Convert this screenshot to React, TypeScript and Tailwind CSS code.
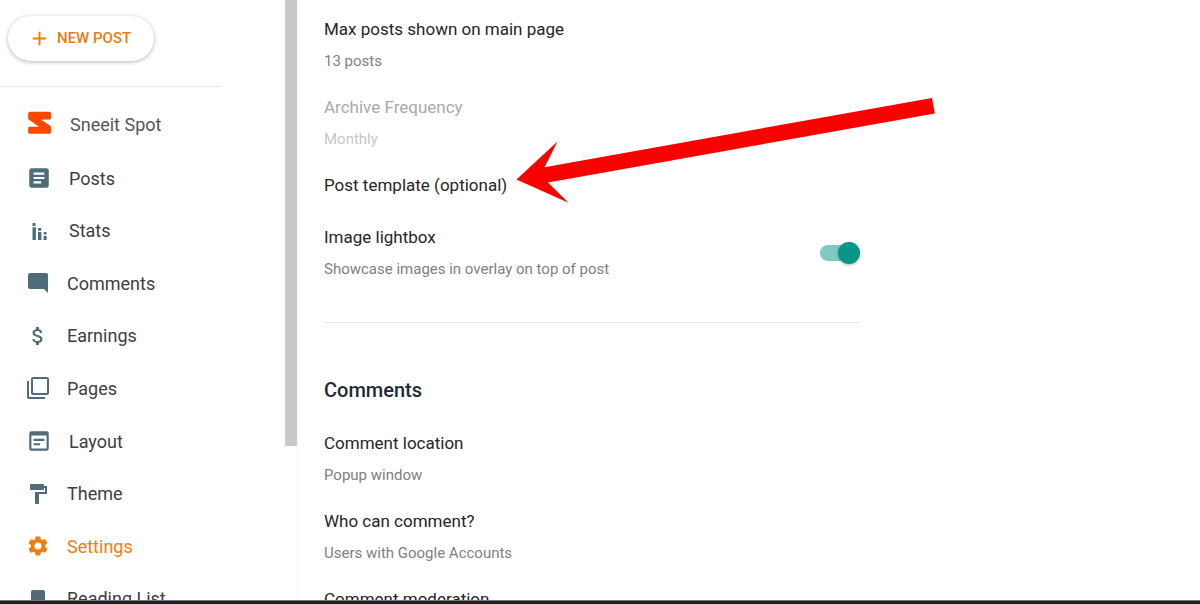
import { useState } from "react";
import type { ReactNode } from "react";
import {
  MdAdd,
  MdArticle,
  MdAttachMoney,
  MdBookmark,
  MdFilterNone,
  MdFormatPaint,
  MdModeComment,
  MdSettings,
  MdWysiwyg,
} from "react-icons/md";

const StatsIcon = () => (
  <svg viewBox="0 0 26 26" className="size-[26px]" fill="currentColor" aria-hidden="true">
    <path d="M6.5 5h3v3h-3zM6.5 9.2h3.4V22H6.5zM12 10h3.2v2.7H12zM12 14h3.4v8H12zM17.7 14h2.8v2.6h-2.8zM17.5 18h3.2v4h-3.2z" />
  </svg>
);

const BlogLogo = () => (
  <svg viewBox="0 0 26 26" className="size-[26px]" fill="#ff4500" aria-hidden="true">
    <path d="M4 .8H23.4Q25 .8 25 2.4V7.2Q25 8.4 23.8 8.4H14.8L24.2 14.8Q25 15.4 25 16.4V21.2Q25 22.8 23.4 22.8H3.8Q2.2 22.8 2.2 21.2V17Q2.2 15.8 3.4 15.8H13L3 8.8Q2.2 8.2 2.2 7.2V2.4Q2.2 .8 4 .8Z" />
  </svg>
);

const navItems = [
  { label: "Posts", icon: <MdArticle className="size-[26px]" /> },
  { label: "Stats", icon: <StatsIcon /> },
  { label: "Comments", icon: <MdModeComment className="size-6" /> },
  { label: "Earnings", icon: <MdAttachMoney className="size-6" /> },
  { label: "Pages", icon: <MdFilterNone className="size-6" /> },
  { label: "Layout", icon: <MdWysiwyg className="size-[26px]" /> },
  { label: "Theme", icon: <MdFormatPaint className="size-6" /> },
  { label: "Settings", icon: <MdSettings className="size-6" />, active: true },
  { label: "Reading List", icon: <MdBookmark className="size-6" /> },
];

const Sidebar = () => (
  <aside className="flex w-[297px] shrink-0 justify-between overflow-hidden">
    <div className="w-[222px]">
      <div className="border-b border-[#e6e6e6] pt-4 pb-[25px] pl-2">
        <button className="flex h-[45px] w-[146px] items-center gap-1.5 rounded-full bg-white pl-5 text-[15px] font-medium text-[#e37e10] shadow-[0_1px_4px_rgba(0,0,0,0.3)]">
          <MdAdd className="size-[23px]" />
          NEW POST
        </button>
      </div>
      <a href="#blog" className="mt-2.5 flex h-[54px] items-center gap-[18px] pl-[26px] text-[18px] text-[#555]">
        <BlogLogo />
        Sneeit Spot
      </a>
      <nav className="mt-px grid h-[473px] auto-rows-fr">
        {navItems.map((item) => (
          <a
            key={item.label}
            href="#"
            className={`flex items-center gap-[17px] pl-[26px] text-[18px] ${
              item.active ? "text-[#ef7f0c]" : "text-[#3c4043]"
            }`}
          >
            <span className={item.active ? "text-[#ef7f0c]" : "text-[#506b7a]"}>{item.icon}</span>
            {item.label}
          </a>
        ))}
      </nav>
    </div>
    <div className="h-[446px] w-3 bg-[#c9c9c9]" />
  </aside>
);

type SettingProps = {
  title: string;
  value?: string;
  disabled?: boolean;
  children?: ReactNode;
};

const Setting = ({ title, value, disabled, children }: SettingProps) => (
  <div className="relative min-h-[52px] pt-[11px]">
    <button
      disabled={disabled}
      className={`block w-full text-left ${disabled ? "text-[#a9a9a9]" : "text-[#262626]"}`}
    >
      <span className="block text-[17px] leading-6">{title}</span>
      {value && (
        <span className={`mt-2 mb-[11px] block text-[15px] leading-6 ${disabled ? "text-[#c8c8c8]" : "text-[#808080]"}`}>
          {value}
        </span>
      )}
    </button>
    {children}
  </div>
);

const Arrow = () => (
  <svg
    viewBox="0 0 420 107"
    className="pointer-events-none absolute -top-[65px] left-[192px] h-[107px] w-[420px]"
    fill="#fb0000"
    aria-hidden="true"
  >
    <path d="M.5 82.5 41.5 44.5 28.5 70.2 416 1 418.8 16.5 32 85.5 52.5 105.8Z" />
  </svg>
);

const LightboxSetting = () => {
  const [enabled, setEnabled] = useState(true);

  return (
    <div className="flex items-center justify-between py-[11px]">
      <label htmlFor="lightbox">
        <span className="block text-[17px] leading-6 text-[#262626]">Image lightbox</span>
        <span className="mt-2 block text-[15px] leading-6 text-[#808080]">
          Showcase images in overlay on top of post
        </span>
      </label>
      <input
        id="lightbox"
        type="checkbox"
        role="switch"
        checked={enabled}
        onChange={(e) => setEnabled(e.target.checked)}
        className="flex h-4 w-10 appearance-none items-center rounded-full bg-[#bdbdbd] before:size-[22px] before:shrink-0 before:rounded-full before:bg-white before:shadow-[0_1px_3px_rgba(0,0,0,0.3)] before:content-[''] checked:justify-end checked:bg-[#7fcbc3] checked:before:bg-[#059688]"
      />
    </div>
  );
};

const App = () => {
  return (
    <div className="flex h-screen flex-col overflow-hidden bg-white font-[Roboto,sans-serif]">
      <div className="flex min-h-0 flex-1">
        <Sidebar />
        <main className="min-w-0 flex-1 overflow-hidden border-l border-[#f5f5f5] px-[26px] pt-1.5">
          <div className="max-w-[536px]">
            <section>
              <Setting title="Max posts shown on main page" value="13 posts" />
              <Setting title="Archive Frequency" value="Monthly" disabled />
              <Setting title="Post template (optional)">
                <Arrow />
              </Setting>
              <LightboxSetting />
            </section>
            <section className="mt-[30px] border-t border-[#e6e6e6] pt-[53px]">
              <h2 className="mb-4 text-[20px] leading-7 font-medium text-[#202b33]">Comments</h2>
              <Setting title="Comment location" value="Popup window" />
              <Setting title="Who can comment?" value="Users with Google Accounts" />
              <Setting title="Comment moderation" />
            </section>
          </div>
        </main>
      </div>
      <footer className="h-1 shrink-0 border-t border-[#777] bg-[#202124]" />
    </div>
  );
};

export default App;
